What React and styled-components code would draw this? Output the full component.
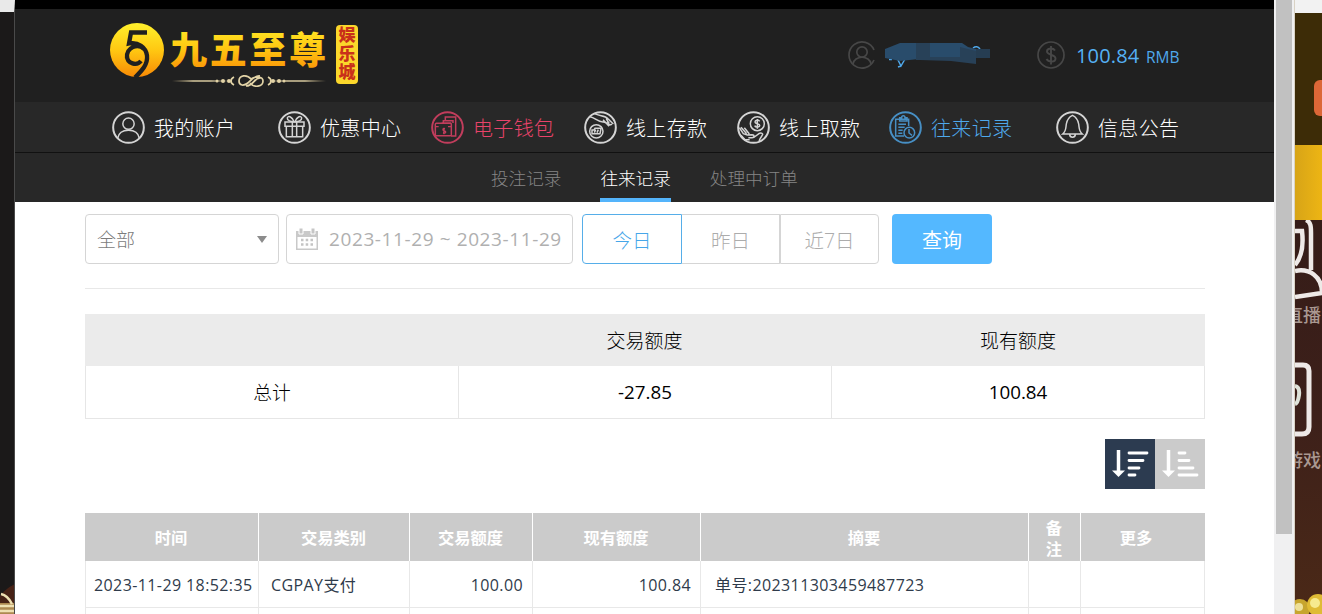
import React from 'react';
import styled, { createGlobalStyle, css } from 'styled-components';

const navItems = [
  { label: '我的账户', icon: 'user', width: 166 },
  { label: '优惠中心', icon: 'gift', width: 153 },
  { label: '电子钱包', icon: 'wallet', width: 153, color: '#e8436a' },
  { label: '线上存款', icon: 'deposit', width: 153 },
  { label: '线上取款', icon: 'withdraw', width: 152 },
  { label: '往来记录', icon: 'record', width: 167, color: '#4fa9ec' },
  { label: '信息公告', icon: 'bell', width: 124 },
];

const columns = ['时间', '交易类别', '交易额度', '现有额度', '摘要', '备注', '更多'];

const NavIcon = ({ name }) => (
  <IconSvg viewBox="0 0 99 99" $size={33}>
    <circle cx="49.5" cy="49.5" r="46" strokeWidth="6" />
    {name === 'user' && (
      <>
        <circle cx="49.5" cy="38" r="17" />
        <path d="M17 82C20 65 33 58 49.5 58S79 65 82 82" />
      </>
    )}
    {name === 'gift' && (
      <>
        <path d="M21 33h57v13H21zM25 46h49v31H25zM43 33v44M56 33v44" />
        <path d="M48 32C39 32 27 29 28 21c2-9 16-3 20 11zM51 32c9 0 21-3 20-11-2-9-16-3-20 11z" />
      </>
    )}
    {name === 'wallet' && (
      <>
        <path d="M32 37h29M37 37V29h6V18h31v57H60M37 29h29v7" />
        <rect x="13" y="37" width="48" height="37" rx="3" />
        <path d="M13 47h10M51 47h10M42 53c-8-2-8 6-2 7s6 8-4 6M39 50v20" strokeWidth="4" />
      </>
    )}
    {name === 'deposit' && (
      <>
        <circle cx="37" cy="61" r="20" />
        <path d="M24 68v-11h6l3-5h18l-3 16zM31 65l4-9M39 65l4-9" />
        <path d="M18 17C34 20 42 34 58 33c9 0 11 7 17 13M31 8c17 8 32 5 41 15l16 16M57 26l10 11 9-4M67 22l9 20 8-2" />
      </>
    )}
    {name === 'withdraw' && (
      <>
        <circle cx="61" cy="38" r="21" />
        <path d="M68 31c-4-6-14-4-14 2 0 7 14 3 14 10 0 7-12 7-15 1M61 24v29" />
        <path d="M7 50l12 18 12 4 14-1c8 0 8 9 0 9H34M12 49l17 19M22 50l15 19M45 80c15-1 18-18 30-13 7 4-7 11-9 25M12 73l12 13h14" />
      </>
    )}
    {name === 'record' && (
      <>
        <path d="M59 45V25H20v50h25M32 30V20h6c0-8 10-8 10 0h6v10zM28 40h23M28 49h19M28 58h13M28 67h12" />
        <circle cx="61" cy="65" r="16" />
        <path d="M60 54v12l9 7" />
      </>
    )}
    {name === 'bell' && (
      <path d="M20 69c11-9 9-18 11-30 2-13 10-22 18.500-26C58 17 66 26 68 39c2 12 0 21 11 30zM41 71c1 10 16 10 17 0" />
    )}
  </IconSvg>
);

const Logo = () => (
  <svg width="252" height="68" viewBox="0 0 252 68" overflow="visible">
    <defs>
      <linearGradient id="gold" x1="0" y1="0" x2="0" y2="1">
        <stop offset="0" stopColor="#fff12c" />
        <stop offset="0.5" stopColor="#ffc812" />
        <stop offset="1" stopColor="#f88a05" />
      </linearGradient>
      <linearGradient id="rule">
        <stop offset="0" stopColor="#c9b688" stopOpacity="0" />
        <stop offset="0.35" stopColor="#e2d3a6" />
        <stop offset="0.65" stopColor="#e2d3a6" />
        <stop offset="1" stopColor="#c9b688" stopOpacity="0" />
      </linearGradient>
    </defs>
    <circle cx="27" cy="27" r="27" fill="url(#gold)" />
    <path
      d="M37 9.500H21l-2 11c9-2 17 4 18 12 1 9-5 15-12 22M17 35c-1-11 11-15 17-9M17 33c0 8 10 10 14 5"
      fill="none"
      stroke="#202020"
      strokeWidth="4.300"
    />
    <LogoText x="60" y="41" textLength="156">
      九五至尊
    </LogoText>
    <rect x="62" y="57.300" width="60" height="1.400" fill="url(#rule)" />
    <rect x="156" y="57.300" width="60" height="1.400" fill="url(#rule)" />
    <path
      d="M124 54c-4 2-4 6 0 8M158 54c4 2 4 6 0 8M138 60c-4 3-9 3-9-2 0-6 8-7 12-2M141 56c4-3 12-3 12 2 0 6-9 7-13 2M132 62c8 1 9-10 18-9M136 63c8 0 8-9 15-8"
      fill="none"
      stroke="#e2d3a6"
      strokeWidth="1.700"
    />
    <g fill="#e2d3a6">
      <circle cx="107" cy="58" r="1.500" />
      <circle cx="113" cy="58" r="2" />
      <circle cx="119" cy="58" r="2" />
      <circle cx="163" cy="58" r="2" />
      <circle cx="169" cy="58" r="2" />
      <circle cx="174" cy="58" r="1.500" />
    </g>
    <rect x="226" y="2" width="22" height="59" rx="4" fill="#fbd72b" />
    {['娱', '乐', '城'].map((c, index) => (
      <SealText x="237" y={18 + index * 18.7} key={c}>
        {c}
      </SealText>
    ))}
  </svg>
);

const SortIcon = ({ asc }) => (
  <svg width="50" height="50" viewBox="0 0 50 50" fill="none" stroke="#fff">
    <path d="M13.500 11v22" strokeWidth="3.500" />
    <path d="M7 31.500h13L13.500 38z" fill="#fff" stroke="none" />
    <path
      d={
        asc
          ? 'M24 14h6M24 21.500h10M24 29h14M24 36h18'
          : 'M24 14h18M24 21.500h14M24 29h10M24 36h6'
      }
      strokeWidth="2.800"
      strokeLinecap="round"
    />
  </svg>
);

const CalendarIcon = () => (
  <svg width="22" height="22" viewBox="0 0 22 22">
    <path d="M0 3h22v19H0z" fill="#c9c9c9" />
    <path d="M1.500 9h19v11.500h-19z" fill="#fff" />
    <path d="M3 0h4v6H3zM15 0h4v6h-4z" fill="#c6c6c6" stroke="#fff" />
    <path
      d="M5 12h2.500M9.700 12h2.500M14.500 12h2.500M5 16.500h2.500M9.700 16.500h2.500M14.500 16.500h2.500"
      stroke="#c4c4c4"
      strokeWidth="2.500"
    />
  </svg>
);

const App = () => {
  return (
    <>
      <GlobalStyle />
      <Page>
        <LeftEdge>
          <svg width="15" height="30" viewBox="0 0 15 30">
            <path d="M15 0C8 3 3 8 0 12v18h15z" fill="#472216" />
            <path d="M0 19h15v11H0z" fill="#ad8950" />
            <path d="M1 10c5 1 8 4 11 10M0 22h15M0 27h15" stroke="#eee0b2" strokeWidth="2.500" fill="none" />
          </svg>
        </LeftEdge>
        <Main>
          <Header>
            <Logo />
            <Account>
              <IconSvg viewBox="0 0 28 28" $size={28}>
                <path d="M26 9A13 13 0 1 0 26 19" strokeWidth="1.700" />
                <circle cx="14" cy="11" r="5.200" strokeWidth="1.700" />
                <path d="M5 23c1-9 17-9 18 0" strokeWidth="1.700" />
              </IconSvg>
              <svg width="108" height="28" viewBox="0 0 108 28">
                <path d="M6 18.500h3M15 19l3 6 4-7M18 25l-3 1M90 7q4-3 7 1" stroke="#4fa9ec" strokeWidth="1.500" fill="none" />
                <path d="M2 8L17 2h62l6 4 8 2v10H36L17 20 2 17z" fill="#294c6b" />
                <path d="M33 2h14v17H33zM77 6l16 4v13l-25-3-31-1v-3h40z" fill="#284158" />
                <path d="M93 8h14v9H93z" fill="#263d52" />
              </svg>
            </Account>
            <Balance>
              <IconSvg viewBox="0 0 28 28" $size={28}>
                <circle cx="14" cy="14" r="13" strokeWidth="1.700" />
                <path d="M18 9.500c-2-3-8-2.500-8 1 0 4 8.500 2.500 8.500 7 0 4-7 4-9 .5M14 5v18.500" strokeWidth="1.900" />
              </IconSvg>
              <strong>100.84</strong>
              <span>RMB</span>
            </Balance>
          </Header>
          <Nav>
            {navItems.map(({ label, icon, width, color }) => (
              <NavItem key={icon} $width={width} $color={color}>
                <NavIcon name={icon} />
                {label}
              </NavItem>
            ))}
          </Nav>
          <SubNav>
            <SubLink>投注记录</SubLink>
            <SubLink $active>往来记录</SubLink>
            <SubLink>处理中订单</SubLink>
          </SubNav>
          <Content>
            <Filters>
              <Select>
                全部
                <Caret />
              </Select>
              <DateField>
                <CalendarIcon />
                <span>2023-11-29 ~ 2023-11-29</span>
              </DateField>
              <Ranges>
                <RangeBtn $active>今日</RangeBtn>
                <RangeBtn>昨日</RangeBtn>
                <RangeBtn>近7日</RangeBtn>
              </Ranges>
              <SearchBtn>查询</SearchBtn>
            </Filters>
            <Summary>
              <SummaryHead />
              <SummaryHead>交易额度</SummaryHead>
              <SummaryHead>现有额度</SummaryHead>
              <SummaryCell>总计</SummaryCell>
              <SummaryCell>-27.85</SummaryCell>
              <SummaryCell>100.84</SummaryCell>
            </Summary>
            <Sorting>
              <SortBtn $active>
                <SortIcon />
              </SortBtn>
              <SortBtn>
                <SortIcon asc />
              </SortBtn>
            </Sorting>
            <Records>
              {columns.map((c) => (
                <HeadCell key={c}>
                  <span>{c}</span>
                </HeadCell>
              ))}
              <Cell $pad="0 0 0 8px">2023-11-29 18:52:35</Cell>
              <Cell $pad="0 0 0 12px">CGPAY支付</Cell>
              <Cell $right>100.00</Cell>
              <Cell $right>100.84</Cell>
              <Cell $pad="0 0 0 14px">单号:202311303459487723</Cell>
              <Cell />
              <Cell />
              {columns.map((c) => (
                <Cell key={c} />
              ))}
            </Records>
          </Content>
        </Main>
        <Scrollbar>
          <Thumb />
        </Scrollbar>
        <RightEdge>
          <Promo>
            <PromoBadge />
          </Promo>
          <Gold />
          <Games>
            <svg width="27" height="84" viewBox="0 0 27 84">
              <path
                d="M0 11h7c2 17-2 28-7 34M11 0c5 2 5 7 5 13v37M0 51c14-3 27 5 27 22L0 77"
                fill="none"
                stroke="#eee9e7"
                strokeWidth="4.500"
              />
            </svg>
            <GameLabel>直播</GameLabel>
            <svg width="27" height="120" viewBox="0 0 27 120">
              <path d="M0 36h8q6 0 6 6v56q0 7-7 7H0" fill="none" stroke="#eee9e7" strokeWidth="5" />
              <path d="M0 57q5 1 4 9t-4 9" fill="none" stroke="#dfe3da" strokeWidth="4" />
            </svg>
            <GameLabel>游戏</GameLabel>
            <Coins width="27" height="24" viewBox="0 0 27 24">
              <circle cx="5" cy="19" r="10" fill="#c7a52e" />
              <circle cx="23" cy="15" r="11" fill="#dfbb35" />
              <circle cx="20" cy="13" r="5" fill="#f6ea8f" />
              <circle cx="4" cy="17" r="4" fill="#eee098" />
            </Coins>
          </Games>
        </RightEdge>
      </Page>
    </>
  );
};

const GlobalStyle = createGlobalStyle`
  * {
    box-sizing: border-box;
  }
  body {
    margin: 0;
    overflow: hidden;
    font-family: 'Open Sans', 'Noto Sans CJK SC', sans-serif;
  }
  svg {
    display: block;
    flex-shrink: 0;
  }
  button {
    font-family: inherit;
    padding: 0;
  }
`;

const Page = styled.div`
  display: grid;
  grid-template-columns: 15px 1259px 21px 27px;
  height: 614px;
  overflow: hidden;
`;

const LeftEdge = styled.aside`
  display: flex;
  align-items: flex-end;
  background: #1b1919;
  border-top: 12px solid #e9e9e9;
  border-right: 1px solid #4a4a4a;
  overflow: hidden;
`;

const Main = styled.main`
  min-width: 0;
  overflow: hidden;
  background: #fff;
`;

const IconSvg = styled.svg`
  width: ${({ $size }) => $size}px;
  height: ${({ $size }) => $size}px;
  fill: none;
  stroke: currentColor;
  stroke-width: 4.5;
`;

const Header = styled.header`
  display: flex;
  height: 102px;
  padding: 14px 94px 0 95px;
  border-top: 9px solid #000;
  background: #202020;
`;

const LogoText = styled.text`
  font-family: 'Noto Sans CJK SC', sans-serif;
  font-size: 37px;
  font-weight: 900;
  fill: url(#gold);
`;

const SealText = styled.text`
  font-family: 'Noto Sans CJK SC', sans-serif;
  font-size: 17px;
  font-weight: 900;
  text-anchor: middle;
  fill: #c9301a;
`;

const Account = styled.div`
  display: flex;
  align-items: center;
  gap: 7px;
  height: 28px;
  margin: 18px 0 0 486px;
  color: #474747;
`;

const Balance = styled.div`
  display: flex;
  align-items: baseline;
  height: 28px;
  margin: 18px 0 0 46px;
  color: #474747;
  line-height: 29px;
  svg {
    align-self: center;
  }
  strong {
    width: 63px;
    margin-left: 11px;
    font-size: 20px;
    font-weight: 400;
    letter-spacing: 0.15px;
    color: #55b1f5;
  }
  span {
    margin-left: 7px;
    font-size: 15.500px;
    color: #4fa9ec;
  }
`;

const Nav = styled.nav`
  display: flex;
  height: 51px;
  padding-left: 97px;
  background: #282828;
  border-bottom: 1px solid #111;
`;

const NavItem = styled.a`
  display: flex;
  align-items: center;
  gap: 9px;
  width: ${({ $width }) => $width}px;
  font-size: 20px;
  font-weight: 300;
  letter-spacing: 0.35px;
  white-space: nowrap;
  color: ${({ $color }) => $color || '#fff'};
  svg {
    opacity: 0.8;
  }
`;

const SubNav = styled.nav`
  display: flex;
  gap: 39px;
  height: 49px;
  padding-left: 476px;
  background: #282828;
`;

const SubLink = styled.a`
  height: 49px;
  font-size: 17.600px;
  font-weight: 300;
  line-height: 50px;
  color: #858585;
  ${({ $active }) =>
    $active &&
    css`
      color: #fff;
      border-bottom: 4px solid #54b4fb;
    `}
`;

const Content = styled.div`
  width: 1120px;
  margin-left: 70px;
  padding-top: 12px;
`;

const Filters = styled.div`
  display: flex;
  height: 75px;
  border-bottom: 1px solid #e8e8e8;
  font-size: 19px;
`;

const Select = styled.div`
  display: flex;
  align-items: center;
  justify-content: space-between;
  width: 194px;
  height: 50px;
  padding: 0 11px;
  border: 1px solid #d5d5d5;
  border-radius: 4px;
  color: #7c7c7c;
  font-weight: 300;
`;

const Caret = styled.i`
  border: 5px solid transparent;
  border-top: 7px solid #8c8c8c;
  border-bottom: 0;
`;

const DateField = styled.div`
  display: flex;
  align-items: center;
  gap: 11px;
  width: 287px;
  height: 50px;
  margin-left: 7px;
  padding-left: 9px;
  border: 1px solid #d5d5d5;
  border-radius: 4px;
  color: #b0b0b0;
  letter-spacing: 0.6px;
  white-space: nowrap;
`;

const Ranges = styled.div`
  display: flex;
  margin-left: 9px;
`;

const RangeBtn = styled.button`
  width: 98px;
  height: 50px;
  border: 1px solid #d5d5d5;
  border-left: 0;
  background: #fff;
  color: #acacac;
  font-size: 19.500px;
  font-weight: 300;
  &:last-child {
    width: 99px;
    border-left: 1px solid #d5d5d5;
    border-radius: 0 4px 4px 0;
  }
  ${({ $active }) =>
    $active &&
    css`
      width: 100px;
      border: 1px solid #56aee9;
      border-radius: 4px 0 0 4px;
      color: #46a6e9;
    `}
`;

const SearchBtn = styled.button`
  width: 100px;
  height: 50px;
  margin-left: 13px;
  border: 0;
  border-radius: 4px;
  background: #54b8ff;
  color: #fff;
  font-size: 20px;
`;

const Summary = styled.div`
  display: grid;
  grid-template-columns: 373px 373px 374px;
  grid-template-rows: 52px 53px;
  margin-top: 25px;
  font-size: 19px;
  color: #000;
`;

const SummaryHead = styled.div`
  display: flex;
  align-items: center;
  justify-content: center;
  background: #ebebeb;
  font-weight: 300;
`;

const SummaryCell = styled.div`
  display: flex;
  align-items: center;
  justify-content: center;
  border: solid #e6e6e6;
  border-width: 0 0 1px 1px;
  font-size: 18.800px;
  &:nth-child(4) {
    font-weight: 300;
  }
  &:last-child {
    border-right-width: 1px;
  }
`;

const Sorting = styled.div`
  display: flex;
  justify-content: flex-end;
  margin-top: 20px;
`;

const SortBtn = styled.button`
  width: 50px;
  height: 50px;
  border: 0;
  background: ${({ $active }) => ($active ? '#2c3b50' : '#cbcbcb')};
`;

const Records = styled.div`
  display: grid;
  grid-template-columns: 173px 151px 123px 168px 328px 52px 125px;
  grid-template-rows: 48px 47px 46px;
  margin-top: 24px;
`;

const HeadCell = styled.div`
  display: flex;
  align-items: center;
  justify-content: center;
  padding: 3px 15px 0 14px;
  background: #cbcbcb;
  color: #fff;
  font-size: 16.300px;
  font-weight: 700;
  line-height: 21px;
  text-align: center;
  & + & {
    border-left: 1px solid #fff;
  }
  &:nth-child(7) {
    padding-right: 28px;
  }
`;

const Cell = styled.div`
  padding: ${({ $pad }) => $pad || '0 9px'};
  border: solid #e8e8e8;
  border-width: 0 0 1px 1px;
  color: #2f3b4b;
  font-size: 16px;
  line-height: 48px;
  letter-spacing: 0.4px;
  text-align: ${({ $right }) => ($right ? 'right' : 'left')};
  white-space: nowrap;
  &:nth-child(7n) {
    border-right-width: 1px;
  }
`;

const Scrollbar = styled.div`
  display: flex;
  background: #f0f0f1;
  border-right: 1px solid #d9d2c4;
  padding: 0 2px;
`;

const Thumb = styled.div`
  width: 17px;
  height: 534px;
  background: #c1c1c1;
`;

const RightEdge = styled.aside`
  overflow: hidden;
  background: #44230f;
`;

const Promo = styled.div`
  display: flex;
  justify-content: flex-end;
  height: 145px;
  padding-top: 67px;
  border-top: 13px solid #f2f2f2;
  background: #3d2c07;
`;

const PromoBadge = styled.div`
  width: 8px;
  height: 36px;
  border-radius: 6px 0 0 6px;
  background: #dc6737;
`;

const Gold = styled.div`
  height: 75px;
  background: linear-gradient(90deg, #d7a417, #edb514);
`;

const Games = styled.div`
  display: flex;
  flex-direction: column;
  height: 394px;
  background: linear-gradient(#351c18, #3d201a 50%, #4b2917);
`;

const GameLabel = styled.div`
  display: flex;
  justify-content: flex-end;
  width: 26px;
  height: 25px;
  font-size: 18px;
  font-weight: 500;
  line-height: 23px;
  color: #aa9891;
  white-space: nowrap;
`;

const Coins = styled.svg`
  margin-top: auto;
`;

export default App;
